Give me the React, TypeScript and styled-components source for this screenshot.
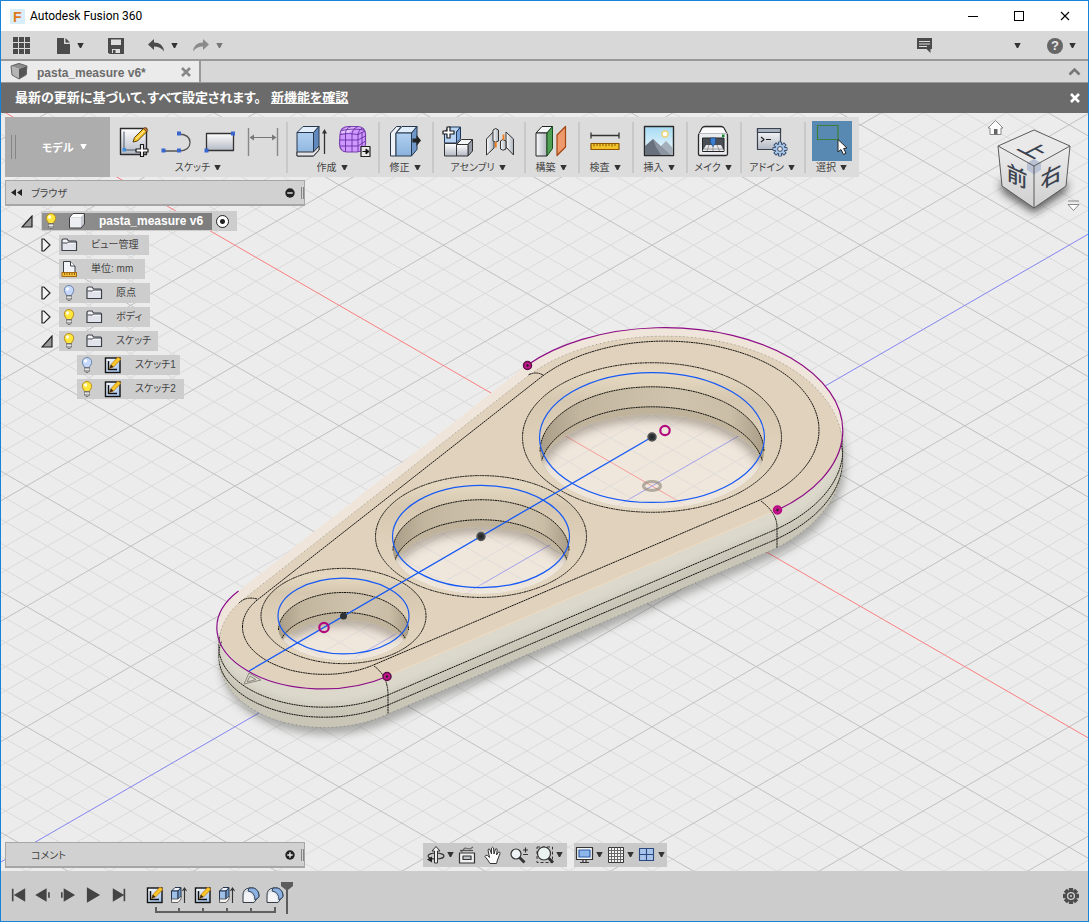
import React from 'react';
import styled, { createGlobalStyle } from 'styled-components';

const jp = '"Liberation Sans", "Noto Sans CJK JP", sans-serif';

const Global = createGlobalStyle`
  *, *::before, *::after { box-sizing: border-box; }
  body { margin: 0; font-family: ${jp}; font-size: 11px; color: #444; font-feature-settings: "palt"; }
  button { font: inherit; color: inherit; border: 0; padding: 0; margin: 0; background: none; font-feature-settings: inherit; }
  ul { list-style: none; margin: 0; padding: 0; }
  svg { display: block; flex: none; }
`;

/* ---------- layout ---------- */

const Window = styled.div`
  display: flex;
  flex-direction: column;
  min-height: 100vh;
  border: 1px solid #1883d7;
  background: #ececec;
`;

const TitleBar = styled.header`
  display: flex;
  align-items: center;
  height: 30px;
  padding-left: 9px;
  background: #fff;
`;

const AppTitle = styled.h1`
  flex: 1;
  margin: 0 0 0 5px;
  font: 400 12px/16px Roboto, "Noto Sans", sans-serif;
  color: #000;
`;

const WindowButton = styled.button`
  display: grid;
  place-items: center;
  width: 46px;
  height: 30px;
`;

const QuickBar = styled.div`
  display: flex;
  align-items: center;
  height: 30px;
  padding: 1px 12px 0;
  background: #d8d8d8;
  border-bottom: 2px solid #999;
`;

const QuickButton = styled.button<{ $gap: number }>`
  display: flex;
  align-items: center;
  gap: 6px;
  margin-right: ${(p) => p.$gap}px;
`;

const Grow = styled.div`
  flex: 1;
`;

const HelpMark = styled.span`
  display: grid;
  place-items: center;
  width: 16px;
  height: 16px;
  border-radius: 50%;
  background: #666;
  color: #e8e8e8;
  font: 700 13px/16px "Liberation Sans", sans-serif;
`;

const TabStrip = styled.div`
  display: flex;
  justify-content: space-between;
  align-items: stretch;
  height: 22px;
  background: #d7d7d7;
  border-bottom: 1px solid #999;
`;

const DocTab = styled.div`
  display: flex;
  align-items: center;
  width: 200px;
  padding: 0 8px 0 9px;
  background: #ebebeb;
  border-right: 2px solid #999;
`;

const DocName = styled.span`
  flex: 1;
  padding: 2px 0 0 9px;
  font: 700 12px/20px "Liberation Sans", sans-serif;
  color: #6b6b6b;
`;

const CollapseTabs = styled.button`
  width: 28px;
  display: grid;
  place-items: center;
`;

const Notice = styled.div`
  display: flex;
  align-items: center;
  height: 30px;
  padding: 0 8px 0 14px;
  background: #6b6b6b;
  color: #fff;
  font-size: 13px;
  font-weight: 700;
  line-height: 20px;
`;

const NoticeText = styled.p`
  flex: 1;
  margin: 0;
`;

const NoticeLink = styled.a`
  margin-left: 10px;
  color: #fff;
  text-decoration: underline;
`;

const Workspace = styled.main`
  position: relative;
  display: flex;
  flex: 1;
  flex-direction: column;
  min-height: 500px;
  padding: 4px 4px 3px;
`;

const SceneSvg = styled.svg`
  position: absolute;
  inset: 0;
  width: 100%;
  height: 100%;
`;

const CubeBox = styled.div`
  position: absolute;
  top: 2px;
  right: 6px;
`;

/* ---------- ribbon ---------- */

const Ribbon = styled.div`
  position: relative;
  display: flex;
  align-self: flex-start;
  height: 60px;
  margin-bottom: 3px;
  background: #dcdcdc;
`;

const ModeButton = styled.button`
  display: flex;
  align-items: center;
  width: 105px;
  padding-left: 6px;
  background: #adadad;
  color: #fff;
  font-weight: 700;
`;

const Grip = styled.span<{ $tall?: boolean }>`
  width: ${(p) => (p.$tall ? 5 : 3)}px;
  height: ${(p) => (p.$tall ? 24 : 12)}px;
  border: solid #858585;
  border-width: 0 1px;
`;

const ModeLabel = styled.span`
  display: flex;
  align-items: center;
  gap: 6px;
  margin-left: 26px;
`;

const Group = styled.div<{ $width: number }>`
  display: flex;
  flex-direction: column;
  align-items: center;
  width: ${(p) => p.$width}px;
  padding-top: 4px;
  background: linear-gradient(#c8c8c8, #c8c8c8) 0 5px / 2px 51px no-repeat;
  &:first-of-type { background: none; }
`;

const Tools = styled.div`
  display: flex;
  gap: 3px;
`;

const Tool = styled.button<{ $active?: boolean }>`
  display: grid;
  place-items: center;
  width: 40px;
  height: 40px;
  background: ${(p) => (p.$active ? '#5889b3' : 'none')};
`;

const GroupLabel = styled.button`
  display: flex;
  align-items: center;
  gap: 4px;
  height: 14px;
  font-size: 10px;
  line-height: 14px;
  white-space: nowrap;
`;

/* ---------- browser tree ---------- */

const PanelBar = styled.div`
  position: relative;
  display: flex;
  align-items: center;
  width: 300px;
  height: 26px;
  padding: 0 0 0 5px;
  background: #d1d1d1;
  border: 1px solid #a6a6a6;
  border-bottom-width: 2px;
`;

const PanelTitle = styled.label<{ $indent: number }>`
  flex: 1;
  margin-left: ${(p) => p.$indent}px;
  font-size: 10px;
`;

const PanelToggle = styled.button`
  margin-right: 6px;
`;

const Tree = styled.ul`
  position: relative;
  display: flex;
  flex-direction: column;
  gap: 4px;
  margin-top: 5px;
`;

const TreeRow = styled.li<{ $indent: number }>`
  display: flex;
  align-items: center;
  height: 20px;
  padding-left: ${(p) => p.$indent}px;
`;

const Twisty = styled.button<{ $wide?: boolean }>`
  display: flex;
  align-items: center;
  width: ${(p) => (p.$wide ? 20 : 18)}px;
  height: 20px;
`;

const NodeLabel = styled.div<{ $width: number }>`
  display: flex;
  align-items: center;
  gap: 9px;
  width: ${(p) => p.$width}px;
  height: 20px;
  padding-left: 2px;
  background: #cdcdcd;
  white-space: nowrap;
`;

const NodeText = styled.span`
  margin-left: 4px;
  font-size: 10px;
  line-height: 20px;
`;

const RootLabel = styled.div`
  display: flex;
  align-items: center;
  gap: 4px;
  height: 20px;
  padding: 0 8px 0 1px;
  background: #cdcdcd;
`;

const RootName = styled.div`
  display: flex;
  align-items: center;
  gap: 9px;
  width: 170px;
  height: 17px;
  padding-left: 1px;
  background: linear-gradient(90deg, #929292, #7d7d7d);
  color: #fff;
  font: 700 12px/17px "Liberation Sans", sans-serif;
`;

const RootText = styled.span`
  margin-left: 4px;
`;

const ActiveRadio = styled.input`
  appearance: none;
  width: 13px;
  height: 13px;
  margin: 0;
  border: 1px solid #222;
  border-radius: 50%;
  background: radial-gradient(circle, #222 0 2px, #fff 3px);
`;

/* ---------- bottom ---------- */

const BottomRow = styled.div`
  position: relative;
  display: grid;
  grid-template-columns: 1fr auto 1fr;
  align-items: center;
  margin-top: auto;
`;

const NavBar = styled.div`
  display: flex;
  gap: 7px;
`;

const NavGroup = styled.div<{ $pad: number }>`
  display: flex;
  align-items: center;
  height: 24px;
  padding: 0 ${(p) => p.$pad}px;
  background: #c9c9c9;
`;

const NavButton = styled.button<{ $menu?: boolean }>`
  display: flex;
  align-items: center;
  justify-content: space-between;
  width: ${(p) => (p.$menu ? 31 : 26)}px;
  padding: 0 2px 0 1px;
`;

const Timeline = styled.footer`
  display: flex;
  align-items: center;
  height: 50px;
  padding: 0 8px 0 5px;
  background: #cccccc;
`;

const PlayButton = styled.button`
  display: grid;
  place-items: center;
  width: 25px;
  height: 24px;
  margin-bottom: 2px;
`;

const Steps = styled.div`
  display: flex;
  flex-direction: column;
  margin: 8px 0 0 12px;
`;

const StepRow = styled.div`
  display: flex;
`;

const Step = styled.button`
  display: grid;
  place-items: center;
  width: 24px;
  height: 18px;
`;

const MarkerBox = styled.div`
  margin: 4px 0 0 -6px;
`;

/* ---------- small glyphs ---------- */

const Caret = ({ c = '#333' }: { c?: string }) => (
  <svg width="7" height="6" viewBox="0 0 7 6"><path d="M.3 0H6.7L4.1 5H2.9Z" fill={c} /></svg>
);

const Cross = ({ c, s = 10, w = 2.6 }: { c: string; s?: number; w?: number }) => (
  <svg width={s} height={s} viewBox="0 0 10 10"><path d="M1 1L9 9M9 1L1 9" stroke={c} strokeWidth={w} /></svg>
);

const Bulb = ({ on }: { on: boolean }) => (
  <svg width="16" height="18" viewBox="0 0 16 18">
    <path d="M8 1.5a4.7 4.7 0 0 0-4.7 4.8c0 2.4 2 3.2 2.2 5.2h5c.2-2 2.2-2.8 2.2-5.2A4.7 4.7 0 0 0 8 1.5Z" fill={on ? '#ffe63c' : '#c5d8fb'} stroke={on ? '#b98b1c' : '#6d84ae'} />
    <circle cx="6.6" cy="5" r="1.7" fill="#fff" opacity=".85" />
    <path d="M5.5 11.5h5v3.5l-1.5 1.5h-2L5.5 15Z" fill="#a9a9a9" stroke="#666" strokeWidth=".8" />
    <path d="M5.5 13.3h5" stroke="#eee" />
  </svg>
);

const Folder = () => (
  <svg width="17" height="14" viewBox="0 0 17 14">
    <path d="M1 12.5V2.5Q1 1 2.5 1H6L7.5 3H14.5Q15.500 3 15.5 4V12.5Z" fill="#f3f5f8" stroke="#3c4048" strokeWidth="1.2" />
    <path d="M1.5 5H6.500L7.5 4H15" fill="none" stroke="#3c4048" />
    <path d="M2 6h13v6H2Z" fill="#d6dae2" opacity=".6" />
  </svg>
);

const SketchMini = () => (
  <svg width="18" height="18" viewBox="0 0 18 18">
    <defs><linearGradient id="skm" x1="0" y1="0" x2="1" y2="1"><stop offset="0" stopColor="#fff" /><stop offset="1" stopColor="#9cbdec" /></linearGradient></defs>
    <rect x="1.5" y="2" width="14.5" height="14.5" fill="url(#skm)" stroke="#111" strokeWidth="1.4" />
    <path d="M4.5 5v8.500H13" fill="none" stroke="#111" strokeWidth="1.5" />
    <path d="M5.500 12.500L7 8.500L14 1L17 3.2L9.500 11Z" fill="#fcc626" stroke="#b4740f" strokeWidth=".7" />
    <path d="M5.500 12.500L7 8.500L9.500 11Z" fill="#3a2a16" />
  </svg>
);

const ExtrudeMini = () => (
  <svg width="18" height="18" viewBox="0 0 18 18">
    <path d="M1.5 5L5 1.5H11L8 5Z" fill="#eef4fc" stroke="#28364c" />
    <path d="M1.5 5H8V14.5H1.5Z" fill="#9fc0e8" stroke="#28364c" />
    <path d="M8 5L11 2V11L8 14.5Z" fill="#6e97c9" stroke="#28364c" />
    <path d="M1.5 13H8L11 10v3L8 16.5H1.5Z" fill="#f3f3f3" stroke="#444" strokeWidth=".8" />
    <path d="M14.5 17V3M12.5 5L14.5 2L16.5 5" fill="none" stroke="#333" strokeWidth="1.1" />
  </svg>
);

const FilletMini = () => (
  <svg width="18" height="18" viewBox="0 0 18 18">
    <path d="M1 16.500V9Q1 3 7 2H11Q17 4 17 10L12 16.500Z" fill="#dfe4ea" stroke="#39404a" />
    <path d="M7 2H12Q17 4 17 11L13 14Q13 6 6 5Z" fill="#8db3e2" stroke="#26364c" strokeWidth=".9" />
    <path d="M2 15.500V10Q2 7 6 6Q11 7 11.500 15.500Z" fill="#f4f4f6" />
  </svg>
);

const CubeMini = () => (
  <svg width="18" height="18" viewBox="0 0 18 18">
    <path d="M1.500 5.500L5 1.500H16.500L13 5.500Z" fill="#fff" />
    <path d="M13 5.500L16.500 1.500V12L13 16Z" fill="#c6c9cf" />
    <path d="M1.500 5.500H13V16H1.500Z" fill="#eceef1" />
    <path d="M1.500 5.500L5 1.500H16.500V12L13 16H1.500Z" fill="none" stroke="#404040" />
  </svg>
);

const UnitsIcon = () => (
  <svg width="17" height="18" viewBox="0 0 17 18">
    <path d="M2.500 14V1.500H9.500L14 6V14" fill="#f1f3f7" stroke="#3c4048" />
    <path d="M9.500 1.500V6H14" fill="#fff" stroke="#3c4048" />
    <rect x="1" y="12.500" width="14.500" height="4" fill="#f2bf3a" stroke="#a66a10" />
    <path d="M3.500 13v2M6 13v2M8.500 13v2M11 13v2M13.500 13v2" stroke="#7d4d05" strokeWidth=".8" />
  </svg>
);

const Collapsed = () => (
  <svg width="10" height="14" viewBox="0 0 10 14"><path d="M1 1V13H3L9 7L3 1Z" fill="#f4f4f4" stroke="#222" strokeWidth="1.2" /></svg>
);
const Expanded = () => (
  <svg width="12" height="13" viewBox="0 0 12 13"><path d="M11 1V12H1Z" fill="#999" stroke="#222" strokeWidth="1.2" /></svg>
);

const PanelGlyph = ({ plus }: { plus?: boolean }) => (
  <svg width="10" height="10" viewBox="0 0 10 10"><circle cx="5" cy="5" r="4.7" fill="#222" /><path d={plus ? 'M2.3 5h5.4M5 2.3v5.4' : 'M2.3 5h5.4'} stroke="#e8e8e8" strokeWidth="1.4" /></svg>
);

/* ---------- ribbon icons, all on a 36px board ---------- */

const Board = ({ children }: { children: React.ReactNode }) => (
  <svg width="36" height="36" viewBox="0 0 36 36" strokeLinejoin="round">{children}</svg>
);

const DefsSvg = styled.svg`
  position: absolute;
`;

const IconDefs = () => (
  <DefsSvg width="0" height="0" aria-hidden="true">
    <defs>
      <linearGradient id="plate" x1="0" y1="0" x2="0" y2="1"><stop offset="0" stopColor="#fff" /><stop offset="1" stopColor="#b3b8c4" /></linearGradient>
      <linearGradient id="steel" x1="0" y1="0" x2="1" y2="0"><stop offset="0" stopColor="#fafbfc" /><stop offset="1" stopColor="#aeb4bd" /></linearGradient>
      <linearGradient id="blueface" x1="0" y1="0" x2="0" y2="1"><stop offset="0" stopColor="#b1d0f0" /><stop offset="1" stopColor="#8ab2dd" /></linearGradient>
      <linearGradient id="sky" x1="0" y1="0" x2="0" y2="1"><stop offset="0" stopColor="#a5daf5" /><stop offset="1" stopColor="#f5fbfd" /></linearGradient>
    </defs>
  </DefsSvg>
);

const CreateSketch = () => (
  <Board>
    <rect x="4.500" y="5.500" width="26" height="26" fill="url(#plate)" stroke="#2b2b2b" strokeWidth="1.4" />
    <path d="M8 8.500V27H24" fill="none" stroke="#4c5968" />
    <rect x="6.500" y="25" width="3.500" height="3.500" fill="#3f8ee0" />
    <path d="M17 19L18.500 14.500L27.500 5.500L31 8.500L21.500 18Z" fill="#fbc92c" stroke="#493100" strokeWidth=".9" />
    <path d="M27.500 5.500L29 4.500Q31.500 5 31.700 7.500L30.500 9Z" fill="#c7743f" stroke="#493100" strokeWidth=".6" />
    <path d="M20 16L28.500 7.500" stroke="#fff2a8" />
    <path d="M24.500 21.500h3v4.500H32v3h-4.500v4.500h-3V29H20v-3h4.500Z" fill="#fff" stroke="#1a1a1a" strokeWidth="1.2" />
  </Board>
);
const LineTool = () => (
  <Board>
    <path d="M4 28H20Q31 27.500 31 19.500T20 11" fill="none" stroke="#555" strokeWidth="1.3" />
    <path d="M2.500 25.500h4v4h-4ZM18 25.500h4v4h-4ZM18 8.500h4v4h-4Z" fill="#3a66cf" />
  </Board>
);
const RectTool = () => (
  <Board>
    <rect x="4.500" y="10.500" width="27" height="17" fill="url(#plate)" stroke="#333" strokeWidth="1.3" />
    <path d="M2.500 25.500h4v4h-4ZM29 8.500h4v4h-4Z" fill="#3a66cf" />
  </Board>
);
const DimensionTool = () => (
  <Board>
    <path d="M3.500 5V33M32.500 5V33" stroke="#888" strokeWidth="1.4" />
    <path d="M5 14.500H31" stroke="#777" />
    <path d="M4.500 14.500l4.500-3v6ZM31.500 14.500l-4.500-3v6Z" fill="#777" />
  </Board>
);
const ExtrudeTool = () => (
  <Board>
    <path d="M4 9.500L10 3.500H26L20.500 9.500Z" fill="#e2effb" stroke="#26384f" />
    <path d="M20.500 9.500L26 3.500V27L20.500 33Z" fill="#6289bd" stroke="#26384f" />
    <path d="M4 9.500H20.500V33H4Z" fill="url(#blueface)" stroke="#26384f" />
    <path d="M4 29H20.500L26 23v4L20.500 33H4Z" fill="#e2e4e8" stroke="#333" />
    <path d="M31.500 31V8" stroke="#333" strokeWidth="1.3" /><path d="M29 10.500L31.500 6L34 10.500Z" fill="#333" />
  </Board>
);
const FormTool = () => (
  <Board>
    <path d="M4 12Q4 4 12 3.500H22Q29 4 29.500 11V21Q29 28 21 29H11Q4 29 3.500 21Z" fill="#cd99ff" stroke="#7a3fae" strokeWidth="1.2" />
    <path d="M5 10Q8 4.500 14 4.500H24Q15 6 13 10Z" fill="#e3c6ff" />
    <path d="M4 11.500Q12 9.500 22 11.500L29 8M3.500 17H22L29.500 13M4 23H22L29.500 18M9.500 29V10Q10 5 15 3.500M16 29V10Q17 5 22 3.500M22 29V11Q23 7 26 5M26 27V9M6 7.500Q15 5 28 7" fill="none" stroke="#6a2da3" strokeWidth=".9" />
    <rect x="25" y="23.500" width="9" height="10" fill="#e8e8e8" stroke="#222" strokeWidth="1.2" />
    <path d="M26.500 28.500H30V26L33 28.500L30 31V28.500" fill="#111" stroke="#111" />
  </Board>
);
const PressPull = () => (
  <Board>
    <path d="M3.500 10L9.500 3.500H14L9 10V33H3.500Z" fill="#eef1f5" stroke="#26384f" />
    <path d="M9 10L15 3.500H30L24.500 10Z" fill="#e0edfb" stroke="#26384f" />
    <path d="M24.500 10L30 3.500V26.500L24.500 33Z" fill="#6f97c8" stroke="#26384f" />
    <path d="M9 10H24.500V33H9Z" fill="url(#blueface)" stroke="#26384f" />
    <path d="M25.500 15.500h4v-3.500l4.500 5.500l-4.500 5.500v-3.500h-4Z" fill="#222" />
  </Board>
);
const NewComponent = () => (
  <Board>
    <path d="M5.500 9L9.500 4H21.500L17.500 9V20H5.500Z" fill="#b8d3f4" stroke="#1f3556" />
    <path d="M17.500 9L21.500 4V16L17.500 20Z" fill="#7ba3d8" stroke="#1f3556" />
    <path d="M5.500 20.500H17.500V33H5.500Z" fill="url(#plate)" stroke="#333" />
    <path d="M17.500 21.500L22.500 16.500H33.500L29 21.500Z" fill="#f4f5f7" stroke="#333" />
    <path d="M29 21.500L33.500 16.500V28L29 33Z" fill="#979ca6" stroke="#333" />
    <path d="M17.500 21.500H29V33H17.500Z" fill="url(#plate)" stroke="#333" />
    <path d="M8 4h3v4h4v3h-4v4H8v-4H4V8h4Z" fill="#fff" stroke="#1a1a1a" strokeWidth="1.2" />
  </Board>
);
const JointTool = () => (
  <Board>
    <path d="M4.500 16L12 8V25L4.500 32Z" fill="url(#steel)" stroke="#333" />
    <path d="M11 7Q13.500 4 16.500 7V18Q13.500 20.500 11 18Z" fill="url(#steel)" stroke="#333" />
    <path d="M31.500 16L24 9V24L31.500 32Z" fill="url(#steel)" stroke="#333" />
    <path d="M18.500 18Q20.500 15 24 18V26Q21 28.500 18.500 26Z" fill="url(#steel)" stroke="#333" />
    <path d="M13.800 19V24.500M21.500 11.500V17" stroke="#f57b16" strokeWidth="1.8" />
  </Board>
);
const PlaneTool = () => (
  <Board>
    <path d="M3 10L9 3.500H19.500L14 10Z" fill="#f5f6f7" stroke="#222" />
    <path d="M3 10H14V33H3Z" fill="url(#steel)" stroke="#222" />
    <path d="M14 10L19.500 3.500V25.500L14 33Z" fill="#4fa052" stroke="#164f1b" />
    <path d="M24 12L32.500 3.500V24L24 32.500Z" fill="#ee9a6c" stroke="#a34512" strokeWidth="1.2" />
  </Board>
);
const MeasureTool = () => (
  <Board>
    <path d="M4 12.500H32M4 9.500v6M32 9.500v6" stroke="#333" strokeWidth="1.3" />
    <rect x="4" y="20.500" width="28" height="6" fill="#f1c22c" stroke="#8c5600" strokeWidth="1.2" />
    <path d="M7 21v2.500M10 21v2M13 21v2.500M16 21v2M19 21v2.500M22 21v2M25 21v2.500M28 21v2" stroke="#6e4200" strokeWidth=".8" />
  </Board>
);
const InsertTool = () => (
  <Board>
    <rect x="3.500" y="3.500" width="29" height="29" fill="url(#sky)" stroke="#2a2a2a" strokeWidth="1.4" />
    <circle cx="24" cy="11" r="3" fill="#fff" stroke="#f0d372" strokeWidth="1.3" />
    <path d="M14 29L25 18L32 25V32H14Z" fill="#a4afb9" />
    <path d="M4 23L12 16L29 32H4Z" fill="#68707d" />
    <path d="M12 16L15 24L20 32H29Z" fill="#8d95a1" />
  </Board>
);
const MakeTool = () => (
  <Board>
    <path d="M3.500 12L7 5Q8 3.500 10 3.500H26Q28 3.500 29 5L32.500 12V31Q32.500 32.500 31 32.500H5Q3.500 32.500 3.500 31Z" fill="#e9ebee" stroke="#2a2a2a" strokeWidth="1.3" />
    <path d="M5 10L8 5H28L31 10Z" fill="#fbfbfc" />
    <path d="M4 10.500H32" stroke="#b9bcc2" />
    <path d="M7.500 15H29V28.500H7.500Z" fill="#4a4e55" stroke="#222" />
    <path d="M11 22H26L29 28H7.500Z" fill="#e6e8ec" />
    <path d="M9 26H28M14 22L12 28M18 22V28M22 22L24.500 28" stroke="#888" strokeWidth=".8" />
    <path d="M15.500 15H20.500V20L18 23.500L15.500 20Z" fill="#3a7fd2" stroke="#1f4a85" strokeWidth=".7" />
    <rect x="27" y="11.500" width="2.500" height="2.500" fill="#108a2c" />
  </Board>
);
type GearProps = { cx: number; cy: number; r: number; fill: string; stroke: string; hole: string };
const Gear = ({ cx, cy, r, fill, stroke, hole }: GearProps) => (
  <g>
    {[0, 45, 90, 135].map((a) => (
      <rect key={a} x={cx - r * 0.22} y={cy - r} width={r * 0.44} height={r * 2} fill={fill} stroke={stroke} strokeWidth="1" transform={`rotate(${a} ${cx} ${cy})`} />
    ))}
    <circle cx={cx} cy={cy} r={r * 0.72} fill={fill} stroke={stroke} />
    {[0, 45, 90, 135].map((a) => (
      <rect key={a} x={cx - r * 0.22 + 0.5} y={cy - r + 0.6} width={r * 0.44 - 1} height={r * 2 - 1.2} fill={fill} transform={`rotate(${a} ${cx} ${cy})`} />
    ))}
    <circle cx={cx} cy={cy} r={r * 0.34} fill={hole} stroke={stroke} />
  </g>
);
const AddinTool = () => (
  <Board>
    <rect x="3.500" y="5.500" width="23" height="21" fill="url(#plate)" stroke="#39424e" strokeWidth="1.2" />
    <rect x="3.500" y="5.500" width="23" height="4" fill="#a7b0bc" stroke="#39424e" strokeWidth="1.2" />
    <path d="M7 14l3 2.500l-3 2.500M12 16.500h5" fill="none" stroke="#222" strokeWidth="1.2" />
    <Gear cx={26} cy={26} r={7} fill="#a8c3e6" stroke="#38506f" hole="#e9e9e9" />
  </Board>
);
const SelectTool = () => (
  <Board>
    <rect x="3.500" y="2.500" width="20.500" height="14" fill="none" stroke="#3f7d3a" strokeWidth="1.2" />
    <path d="M24 16.500V29L27 26.500L29.500 31.500L32 30.300L29.700 25.500L33 25Z" fill="#fff" stroke="#222" />
  </Board>
);

/* ---------- 3D scene ---------- */

type Pt = [number, number];
const K = 0.5774;
const ORIGIN: Pt = [652, 486];
const STEP = 24.08;

// Points of an ellipse between two angles, pushed outward along the normal by `off`.
const arc = (cx: number, cy: number, a: number, off = 0, from = 0, to = 360): Pt[] => {
  const b = a * K;
  const pts: Pt[] = [];
  for (let d = from; d <= to; d += 3) {
    const t = (d * Math.PI) / 180;
    const nx = b * Math.cos(t);
    const ny = a * Math.sin(t);
    const n = Math.hypot(nx, ny);
    pts.push([cx + a * Math.cos(t) + (off * nx) / n, cy + b * Math.sin(t) + (off * ny) / n]);
  }
  return pts;
};

const hull = (input: Pt[]): Pt[] => {
  const pts = [...input].sort((p, q) => p[0] - q[0] || p[1] - q[1]);
  const cross = (o: Pt, p: Pt, q: Pt) => (p[0] - o[0]) * (q[1] - o[1]) - (p[1] - o[1]) * (q[0] - o[0]);
  const half = (list: Pt[]) => {
    const out: Pt[] = [];
    list.forEach((p) => {
      while (out.length > 1 && cross(out[out.length - 2], out[out.length - 1], p) <= 0) out.pop();
      out.push(p);
    });
    out.pop();
    return out;
  };
  return [...half(pts), ...half(pts.reverse())];
};

const path = (pts: Pt[], close = true) =>
  'M' + pts.map((p) => `${p[0].toFixed(1)} ${p[1].toFixed(1)}`).join('L') + (close ? 'Z' : '');

const BIG: Pt = [665, 430];
const SMALL: Pt = [324.5, 627];
const outline = (inset: number, dy: number, off = 0) => [
  ...arc(BIG[0], BIG[1] + dy, 178 - inset, off),
  ...arc(SMALL[0], SMALL[1] + dy, 106 - inset, off),
];

const profile = path(hull(outline(0, 0)));
const topEdge = path(hull(outline(24, 0)));
const wallTop = path(hull(outline(0, 19)));
const wallBottom = path(hull(outline(0, 29)));
const silhouette = path(hull([...outline(24, 19, 24), ...outline(24, 29, 24)]));

const HOLES = [
  { id: 'a', x: 652, y: 437.5, r: 112 },
  { id: 'b', x: 481, y: 536.5, r: 88 },
  { id: 'c', x: 343.5, y: 616, r: 65 },
];

const Floor = () => {
  const lines: React.ReactNode[] = [];
  const x0 = -700;
  const x1 = 2000;
  [false, true].forEach((major) => {
    for (let k = -80; k <= 80; k++) {
      if (k === 0 || (k % 5 === 0) !== major) continue;
      [K, -K].forEach((m) => {
        const y = (x: number) => ORIGIN[1] + m * (x - ORIGIN[0]) + k * STEP;
        lines.push(<path key={`${k}${m}`} d={`M${x0} ${y(x0)}L${x1} ${y(x1)}`} stroke={major ? '#c0c0c0' : '#dadada'} />);
      });
    }
  });
  const axis = (m: number) => `M${x0} ${ORIGIN[1] + m * (x0 - ORIGIN[0])}L${x1} ${ORIGIN[1] + m * (x1 - ORIGIN[0])}`;
  return (
    <g fill="none" strokeWidth="1">
      {lines}
      <path d={axis(K)} stroke="#fb7f7f" />
      <path d={axis(-K)} stroke="#8484f2" />
    </g>
  );
};

const Hole = ({ id, x, y, r }: { id: string; x: number; y: number; r: number }) => {
  const rim = r + 17.5;
  const visible = path([...arc(x, y + 14, r, 0, 180, 360), ...arc(x, y + 14, rim, -17.5, 0, 180)]);
  const opening = path(arc(x, y + 34, rim, -17.5));
  return (
    <g>
      <clipPath id={`vis-${id}`}><path d={visible} /></clipPath>
      <clipPath id={`open-${id}`}><path d={opening} /></clipPath>
      <ellipse cx={x} cy={y} rx={rim} ry={rim * K} fill="url(#lip)" />
      <path d={visible} fill="url(#bore)" />
      <g clipPath={`url(#vis-${id})`}>
        <path d={path([...arc(x, y + 34, r, 0, 180, 360), [x + r, y + 120], [x - r, y + 120]])} fill="#bfb39b" />
        <g clipPath={`url(#open-${id})`}>
          <rect x={x - r} y={y - r} width={r * 2} height={r * 2} fill="#efe6dc" />
          <g opacity=".7"><Floor /></g>
          <path d={opening} fill="none" stroke="#5c5040" strokeOpacity=".4" strokeWidth="12" filter="url(#soft)" />
          <path d={path(arc(x, y + 14, rim, -17.5, 15, 165), false)} fill="none" stroke="#efe6dc" strokeWidth="12" filter="url(#soft)" />
        </g>
        <path d={path(arc(x, y + 34, r, 0, 180, 360), false)} className="edge" />
      </g>
      <path d={path(arc(x, y + 14, r, 0, 180, 360), false)} className="edge" />
      <ellipse cx={x} cy={y} rx={rim} ry={rim * K} className="edge" />
      <ellipse cx={x} cy={y} rx={r + 0.5} ry={(r + 0.5) * K} fill="none" stroke="#1659f5" strokeWidth="1.2" />
    </g>
  );
};

const SceneGroup = styled.g`
  .edge { fill: none; stroke: #161410; stroke-width: 1; stroke-dasharray: 2 .5; }
  .curve { fill: none; stroke: #8d0d87; stroke-width: 1.2; }
`;

const Dot = ({ x, y, c, s }: { x: number; y: number; c: string; s: string }) => (
  <g><circle cx={x} cy={y} r="4" fill={c} stroke={s} strokeWidth="1.5" /><circle cx={x} cy={y} r="1.2" fill="#222" /></g>
);

const Scene = () => (
  <SceneSvg viewBox="1 113 1087 758" preserveAspectRatio="xMidYMid slice" aria-label="pasta_measure">
    <defs>
      <filter id="soft" x="-20%" y="-20%" width="140%" height="140%"><feGaussianBlur stdDeviation="4" /></filter>
      <linearGradient id="lip" x1="0" y1="0" x2="0" y2="1"><stop offset="0" stopColor="#e0d1bb" /><stop offset=".08" stopColor="#e5d8c1" /><stop offset=".25" stopColor="#d6c8b0" /><stop offset=".5" stopColor="#ddcfb8" /><stop offset="1" stopColor="#e5d8c3" /></linearGradient>
      <linearGradient id="bore" x1="0" y1="0" x2="1" y2="0"><stop offset="0" stopColor="#a99d87" /><stop offset=".18" stopColor="#c3b69f" /><stop offset=".6" stopColor="#d0c3ad" /><stop offset=".85" stopColor="#cbbea7" /><stop offset="1" stopColor="#a99d87" /></linearGradient>
      <clipPath id="bodyClip"><path d={silhouette} /></clipPath>
    </defs>
    <SceneGroup>
      <rect x="-700" y="-700" width="2700" height="2400" fill="#ececec" />
      <Floor />
      <path d={silhouette} transform="translate(2 7)" fill="#3a3a36" opacity=".38" filter="url(#soft)" />
      <path d={profile} fill="#efe5da" />
      <path d={silhouette} fill="#c9c6b8" />
      <g clipPath="url(#bodyClip)">
        <path d={profile} transform="translate(0 15)" fill="#dcd9cc" stroke="#dcd9cc" strokeWidth="4" filter="url(#soft)" />
        <path d={wallTop} className="edge" />
        <path d={wallBottom} className="edge" />
        <path d={profile} fill="#e0d2bc" />
      </g>
      <path d={silhouette} fill="none" stroke="#55524a" strokeOpacity=".6" strokeDasharray="1 3" strokeWidth=".7" />
      <path d="M777 510L387 676" stroke="#f0dcc2" fill="none" />
      <path d={topEdge} className="edge" />
      <path className="edge" d="M761 501Q777 513 777 527V548M374 666Q388 676 388 695V714M543 375Q536 371 528 375M239 603Q246 596 257 599" />
      {HOLES.map((h) => <Hole key={h.id} {...h} />)}
      <ellipse cx="652" cy="486" rx="8.5" ry="4.5" fill="none" stroke="#8c8478" strokeOpacity=".6" strokeWidth="3" />
      <path d="M249 671L652 437" stroke="#1659f5" strokeWidth="1.3" />
      <path className="curve" d="M527.5 365A178 102.800 0 1 1 777.5 510M238.5 591A106 61 0 0 0 387 676.5" />
      <path d="M249 673L244 684L261 680ZM250 676L247 682L256 679.5Z" fill="none" stroke="#8c8880" />
      <Dot x={652} y={437} c="#303336" s="#565656" />
      <Dot x={481} y={536.5} c="#303336" s="#565656" />
      <circle cx="343.5" cy="616" r="3.5" fill="#303336" />
      <Dot x={527.5} y={365.5} c="#c4148c" s="#5d1048" />
      <Dot x={387} y={676.5} c="#c4148c" s="#5d1048" />
      <Dot x={777.5} y={510} c="#c4148c" s="#b50b81" />
      <circle cx="665" cy="430.500" r="4.7" fill="#efe6dc" stroke="#b10a7f" strokeWidth="2.2" />
      <circle cx="324" cy="627.500" r="4.7" fill="none" stroke="#b10a7f" strokeWidth="2.2" />
    </SceneGroup>
  </SceneSvg>
);

const ViewCube = () => (
  <svg width="96" height="104" viewBox="986 115 96 104">
    <defs>
      <filter id="cubeSoft" x="-30%" y="-30%" width="160%" height="160%"><feGaussianBlur stdDeviation="4" /></filter>
      <linearGradient id="faceL" x1="0" y1="0" x2="0" y2="1"><stop offset="0" stopColor="#ececec" /><stop offset="1" stopColor="#cfcfcf" /></linearGradient>
    </defs>
    <path d="M1000 180L1034 196L1068 180L1066 192L1034 213L1002 192Z" fill="#333" opacity=".75" filter="url(#cubeSoft)" />
    <path d="M998 146L1034 166V208L1002 186Z" fill="url(#faceL)" />
    <path d="M1070 146L1034 166V208L1066 186Z" fill="url(#faceL)" />
    <path d="M998 146L1034 130L1070 146L1034 166Z" fill="#e9e9e9" />
    <path d="M1034 159L1041 163V170L1034 174.500L1027 170V163Z" fill="#b9c1d4" />
    <path d="M998 146L1034 130L1070 146L1066 186L1034 208L1002 186ZM998 146L1034 166L1070 146M1034 166V208" fill="none" stroke="#5a5a5a" />
    <g fill="#3c4350" fontFamily="Noto Sans CJK JP, sans-serif" fontSize="21" fontWeight="500" textAnchor="middle">
      <text transform="translate(1017 184) skewY(25)">前</text>
      <text transform="translate(1051 184) skewY(-28)">右</text>
      <text transform="matrix(.8 .42 -.8 .42 1026 154)" fontSize="25">上</text>
    </g>
    <path d="M988 128L995.500 120.500L1003 128H1001V134.500H990V128Z" fill="#fff" stroke="#888" />
    <path d="M994 129h3.500v5.500H994Z" fill="#666" />
    <path d="M1068 201H1079M1068 204.500H1079L1073.500 210.500Z" fill="#fff" stroke="#888" />
  </svg>
);

/* ---------- data ---------- */

const groups = [
  { label: 'スケッチ', width: 176, tools: [CreateSketch, LineTool, RectTool, DimensionTool] },
  { label: '作成', width: 92, tools: [ExtrudeTool, FormTool] },
  { label: '修正', width: 54, tools: [PressPull] },
  { label: 'アセンブリ', width: 92, tools: [NewComponent, JointTool] },
  { label: '構築', width: 54, tools: [PlaneTool] },
  { label: '検査', width: 54, tools: [MeasureTool] },
  { label: '挿入', width: 54, tools: [InsertTool] },
  { label: 'メイク', width: 54, tools: [MakeTool] },
  { label: 'アドイン', width: 64, tools: [AddinTool] },
  { label: '選択', width: 55, tools: [SelectTool], active: true },
];

type Node = { text: string; indent: number; width: number; open?: boolean; bulb?: boolean; icon: React.FC };
const nodes: Node[] = [
  { text: 'ビュー管理', indent: 36, width: 90, open: false, icon: Folder },
  { text: '単位: mm', indent: 54, width: 86, icon: UnitsIcon },
  { text: '原点', indent: 36, width: 91, open: false, bulb: false, icon: Folder },
  { text: 'ボディ', indent: 36, width: 91, open: false, bulb: true, icon: Folder },
  { text: 'スケッチ', indent: 36, width: 99, open: true, bulb: true, icon: Folder },
  { text: 'スケッチ1', indent: 72, width: 103, bulb: false, icon: SketchMini },
  { text: 'スケッチ2', indent: 72, width: 107, bulb: true, icon: SketchMini },
];

const play = [
  { label: '先頭へ', d: 'M3 3V17M16 4V16L6 10Z' },
  { label: '前へ', d: 'M12 4V16L2 10ZM15.500 7V13' },
  { label: '次へ', d: 'M2 7V13M5 4V16L15 10Z' },
  { label: '再生', d: 'M3 3V17L15 10Z' },
  { label: '末尾へ', d: 'M4 4V16L14 10ZM16 3V17' },
];

const Nav = ({ children }: { children: React.ReactNode }) => (
  <svg width="20" height="20" viewBox="0 0 20 20" fill="none" stroke="#333" strokeWidth="1.2" strokeLinejoin="round">{children}</svg>
);

export default function App() {
  return (
    <Window>
      <Global />
      <IconDefs />
      <TitleBar>
        <svg width="15" height="15" viewBox="0 0 15 15">
          <rect width="15" height="15" fill="#d9eef8" />
          <text x="3" y="13" fontFamily="Liberation Sans, sans-serif" fontWeight="700" fontSize="14" fill="#e07a1f">F</text>
        </svg>
        <AppTitle>Autodesk Fusion 360</AppTitle>
        <WindowButton aria-label="最小化"><svg width="10" height="10" viewBox="0 0 10 10"><path d="M0 5.500H10" stroke="#000" /></svg></WindowButton>
        <WindowButton aria-label="最大化"><svg width="10" height="10" viewBox="0 0 10 10"><rect x=".5" y=".5" width="9" height="9" fill="none" stroke="#000" /></svg></WindowButton>
        <WindowButton aria-label="閉じる"><Cross c="#000" w={1.1} /></WindowButton>
      </TitleBar>

      <QuickBar>
        <QuickButton $gap={26} aria-label="データパネル">
          <svg width="17" height="17" viewBox="0 0 17 17" fill="#4b4b4b">
            {[0, 6, 12].map((y) => [0, 6, 12].map((x) => <rect key={`${x}${y}`} x={x} y={y} width="5" height="5" />))}
          </svg>
        </QuickButton>
        <QuickButton $gap={24} aria-label="ファイル">
          <svg width="15" height="16" viewBox="0 0 15 16"><path d="M1 0H8V6H14V16H1ZM9.500 0L14 4.500H9.500Z" fill="#4b4b4b" /></svg>
          <Caret />
        </QuickButton>
        <QuickButton $gap={23} aria-label="保存">
          <svg width="16" height="16" viewBox="0 0 16 16"><path d="M0 0H16V16H1.500L0 14.500Z" fill="#4b4b4b" /><path d="M3 1.500H13V7H3ZM4 11H12V15H4Z" fill="#dcdcdc" /><path d="M5 12h2.500v3H5Z" fill="#4b4b4b" /></svg>
        </QuickButton>
        <QuickButton $gap={14} aria-label="元に戻す">
          <svg width="18" height="13" viewBox="0 0 18 13"><path d="M1 5.500L7 0V3.500Q16 3.500 17 12.500Q13.500 7.500 7 7.500V11Z" fill="#4b4b4b" /></svg>
          <Caret />
        </QuickButton>
        <QuickButton $gap={0} aria-label="やり直し">
          <svg width="18" height="13" viewBox="0 0 18 13"><path d="M17 5.500L11 0V3.500Q2 3.500 1 12.500Q4.500 7.500 11 7.500V11Z" fill="#8b8b8b" /></svg>
          <Caret c="#777" />
        </QuickButton>
        <Grow />
        <QuickButton $gap={81} aria-label="コメント">
          <svg width="17" height="15" viewBox="0 0 17 15"><path d="M1 0H16V11H14.500V15L10.500 11H1Z" fill="#4b4b4b" /><path d="M3 3.500H14M3 6H14M3 8.500H11" stroke="#ddd" /></svg>
        </QuickButton>
        <QuickButton $gap={26} aria-label="アカウント"><Caret /></QuickButton>
        <QuickButton $gap={0} aria-label="ヘルプ"><HelpMark>?</HelpMark><Caret /></QuickButton>
      </QuickBar>

      <TabStrip>
        <DocTab>
          <svg width="18" height="17" viewBox="0 0 18 17"><path d="M1 3L9 0L17 3L9 6Z" fill="#8e8e8e" /><path d="M1 3L9 6V16L2 12Z" fill="#b4b4b4" /><path d="M9 6L17 3V11L9 16Z" fill="#565656" /><path d="M1 3L9 .5L17 3L16 12L9 16L2 12Z" fill="none" stroke="#666" /></svg>
          <DocName>pasta_measure v6*</DocName>
          <button aria-label="タブを閉じる"><Cross c="#888" /></button>
        </DocTab>
        <CollapseTabs aria-label="折りたたむ"><svg width="13" height="9" viewBox="0 0 13 9"><path d="M1.500 7.500L6.500 2.500L11.500 7.500" fill="none" stroke="#777" strokeWidth="2.6" /></svg></CollapseTabs>
      </TabStrip>

      <Notice>
        <NoticeText>最新の更新に基づいて、すべて設定されます。<NoticeLink href="#new">新機能を確認</NoticeLink></NoticeText>
        <button aria-label="通知を閉じる"><Cross c="#fff" /></button>
      </Notice>

      <Workspace>
        <Scene />
        <CubeBox><ViewCube /></CubeBox>
        <Ribbon>
          <ModeButton><Grip $tall /><ModeLabel>モデル <Caret c="#fff" /></ModeLabel></ModeButton>
          {groups.map((g) => (
            <Group key={g.label} $width={g.width}>
              <Tools>
                {g.tools.map((T, i) => <Tool key={i} $active={g.active} aria-label={`${g.label} ${i + 1}`}><T /></Tool>)}
              </Tools>
              <GroupLabel>{g.label}<Caret /></GroupLabel>
            </Group>
          ))}
        </Ribbon>

        <PanelBar>
          <svg width="11" height="7" viewBox="0 0 11 7"><path d="M5 0V7L0 3.500ZM11 0V7L6 3.500Z" fill="#222" /></svg>
          <PanelTitle as="span" $indent={9}>ブラウザ</PanelTitle>
          <PanelToggle aria-label="最小化"><PanelGlyph /></PanelToggle>
          <Grip />
        </PanelBar>

        <Tree>
          <TreeRow $indent={16}>
            <Twisty $wide aria-label="折りたたむ"><Expanded /></Twisty>
            <RootLabel>
              <RootName><Bulb on /><CubeMini /><RootText>pasta_measure v6</RootText></RootName>
              <ActiveRadio type="radio" checked readOnly aria-label="コンポーネントをアクティブ化" />
            </RootLabel>
          </TreeRow>
          {nodes.map((n) => (
            <TreeRow key={n.text} $indent={n.indent}>
              {n.open !== undefined && <Twisty aria-label={n.text}>{n.open ? <Expanded /> : <Collapsed />}</Twisty>}
              <NodeLabel $width={n.width}>
                {n.bulb !== undefined && <Bulb on={n.bulb} />}
                <n.icon />
                <NodeText>{n.text}</NodeText>
              </NodeLabel>
            </TreeRow>
          ))}
        </Tree>

        <BottomRow>
          <PanelBar>
            <PanelTitle as="span" $indent={20}>コメント</PanelTitle>
            <PanelToggle aria-label="コメントを開く"><PanelGlyph plus /></PanelToggle>
            <Grip />
          </PanelBar>
          <NavBar>
            <NavGroup $pad={2}>
              <NavButton $menu aria-label="オービット"><Nav><ellipse cx="10" cy="11" rx="8" ry="3" /><path d="M8.500 18V6H6L10 1.500L14 6H11.500V18Z" fill="#eee" strokeWidth="1" /><path d="M1 14.500l5-3v6Z" fill="#222" stroke="none" /></Nav><Caret /></NavButton>
              <NavButton aria-label="ルックアット"><Nav><rect x="2.500" y="8" width="15" height="10" fill="#f1f1f1" /><rect x="6" y="11" width="8" height="3.500" fill="#bcc3c6" /><path d="M4 7L8 3L13 4L16 2" stroke="#666" /><path d="M3 5.500H16" stroke="#555" /></Nav></NavButton>
              <NavButton aria-label="パン"><Nav><path d="M7 18.500Q5 15 2 11.500Q2.500 9.500 4.500 10.500L6.500 12.500L5 5Q5.500 3 7 4.500L8.500 9L8.500 3Q9.500 1.500 10.500 3L11 9L12.500 4Q14 3 14.200 4.800L13.500 10L15.500 7Q17.200 6.500 17 8.500L14.500 15L13.500 18.500Z" fill="#fff" strokeWidth="1" /></Nav></NavButton>
              <NavButton aria-label="ズーム"><Nav><circle cx="7" cy="9" r="5" fill="#eef3f5" /><path d="M10.500 12.500L15.500 17.500" strokeWidth="2.8" /><path d="M14 5H19M16.500 2.500V7.500M14 9.500H19" /></Nav></NavButton>
              <NavButton $menu aria-label="フィット"><Nav><rect x="2" y="2" width="15.500" height="15.500" strokeDasharray="3 2" strokeWidth="1" /><circle cx="9" cy="8.500" r="6.5" fill="#eaf3f0" /><path d="M13.500 13L18 17.500" strokeWidth="2.8" /></Nav><Caret /></NavButton>
            </NavGroup>
            <NavGroup $pad={0}>
              <NavButton $menu aria-label="表示設定"><Nav><rect x="1.500" y="2.500" width="16" height="12" fill="#f4f4f4" /><rect x="4" y="5" width="11" height="7" fill="#8fb6ea" stroke="#2a5ea8" /><path d="M8 15V17.500H5.500H13.500H11V15" fill="#ddd" /></Nav><Caret /></NavButton>
              <NavButton $menu aria-label="グリッド"><Nav><rect x="2.500" y="2.500" width="15" height="15" fill="#f6f6f6" strokeWidth="1" /><path d="M5.500 2.500v15M8.500 2.500v15M11.500 2.500v15M14.500 2.500v15M2.500 5.500h15M2.500 8.500h15M2.500 11.500h15M2.500 14.500h15" strokeWidth="1" stroke="#666" /></Nav><Caret /></NavButton>
              <NavButton $menu aria-label="ビューポート"><Nav><g fill="#a9c4ea" stroke="#2c4a80" strokeWidth="1.1"><rect x="2.500" y="3.500" width="7" height="6" /><rect x="9.500" y="3.500" width="7" height="6" /><rect x="2.500" y="9.500" width="7" height="6" /><rect x="9.500" y="9.500" width="7" height="6" /></g></Nav><Caret /></NavButton>
            </NavGroup>
          </NavBar>
          <span />
        </BottomRow>
      </Workspace>

      <Timeline>
        {play.map((p) => (
          <PlayButton key={p.label} aria-label={p.label}>
            <svg width="18" height="18" viewBox="0 0 20 20"><path d={p.d} fill="#444" stroke="#444" strokeWidth="1.8" /></svg>
          </PlayButton>
        ))}
        <Steps>
          <StepRow>
            {[SketchMini, ExtrudeMini, SketchMini, ExtrudeMini, FilletMini, FilletMini].map((I, i) => (
              <Step key={i} aria-label={`履歴 ${i + 1}`}><I /></Step>
            ))}
          </StepRow>
          <svg width="144" height="10" viewBox="0 0 144 10"><path d="M13 3V8H132V3M36 4V8M60 4V8M84 4V8M108 4V8" fill="none" stroke="#606060" strokeWidth="2" /></svg>
        </Steps>
        <MarkerBox><svg width="12" height="34" viewBox="0 0 12 34"><path d="M0 1H12V5L7 9V33H5V9L0 5Z" fill="#5c5c5c" /></svg></MarkerBox>
        <Grow />
        <button aria-label="設定"><svg width="18" height="18" viewBox="0 0 18 18"><Gear cx={9} cy={9} r={7.5} fill="#4d4d4d" stroke="#4d4d4d" hole="#4d4d4d" /><circle cx="9" cy="9" r="3.4" fill="none" stroke="#ccc" strokeWidth="1.4" /><circle cx="9" cy="9" r="1" fill="#ccc" /></svg></button>
      </Timeline>
    </Window>
  );
}
